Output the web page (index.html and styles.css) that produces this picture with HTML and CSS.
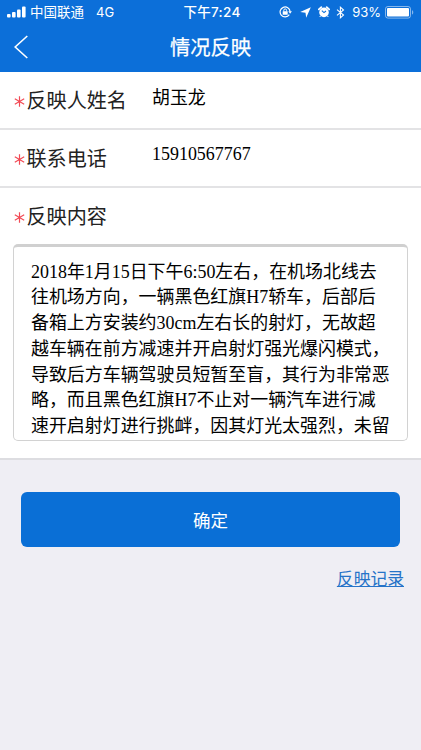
FILE: index.html
```html
<!DOCTYPE html>
<html lang="zh-CN">
<head>
<meta charset="utf-8">
<title>情况反映</title>
<link rel="stylesheet" href="styles.css">
</head>
<body>
<header class="header">
  <div class="status">
    <div class="status-left">
      <svg class="signal" width="19" height="12" viewBox="0 0 19 12" fill="currentColor"><rect x="0" y="8" width="3.6" height="3.6" rx="1"/><rect x="5" y="6" width="3.6" height="5.6" rx="1"/><rect x="10" y="3.5" width="3.6" height="8.1" rx="1"/><rect x="15" y="0.5" width="3.6" height="11.1" rx="1"/></svg>
      <span class="carrier">中国联通</span>
      <span class="network">4G</span>
    </div>
    <div class="time">下午7:24</div>
    <div class="status-right">
      <svg class="lock" width="13" height="12" viewBox="0 0 13 12" fill="none" stroke="currentColor" stroke-width="1.2"><path d="M10.3 8.7A5 5 0 1 1 11.1 5.6"/><path d="M9.3 5.3h3.6L11.1 7.7z" fill="currentColor" stroke="none"/><rect x="3.7" y="5.2" width="5" height="3.6" rx=".4" fill="currentColor" stroke="none"/><path d="M4.8 5.5V4.3a1.4 1.4 0 0 1 2.8 0v1.2" stroke-width="1"/></svg>
      <svg class="arrow" width="11" height="11" viewBox="0 0 11 11" fill="currentColor"><path d="M10.8.2 6.2 10.8 5.5 5.7.2 5z"/></svg>
      <svg class="alarm" width="12" height="12" viewBox="0 0 12 12"><path d="M.8 3.4 3.3 1.1M11.2 3.4 8.7 1.1" stroke="currentColor" stroke-width="1.7" stroke-linecap="round"/><circle cx="6" cy="6.4" r="4.8" fill="currentColor"/><path d="M2.5 10 1.7 11M9.5 10l.8 1" stroke="currentColor"/><path class="hands" d="M3.8 4.7 6 6.6 8 5"/></svg>
      <svg class="bluetooth" width="9" height="13" viewBox="0 0 9 13" fill="none" stroke="currentColor" stroke-width="1.1"><path d="M1 3.6 7.5 9 4.4 11.8V1.2L7.5 4 1 9.4"/></svg>
      <span class="percent">93%</span>
      <svg class="battery" width="29" height="13" viewBox="0 0 29 13"><rect x=".5" y=".5" width="25" height="11.6" rx="2.4" fill="none" stroke="currentColor" opacity=".5"/><rect x="2" y="2" width="22" height="8.6" rx="1" fill="currentColor"/><path d="M27 4.2c1.7.5 1.7 3.7 0 4.2z" fill="currentColor" opacity=".5"/></svg>
    </div>
  </div>
  <div class="navbar">
    <svg class="back" width="16" height="24" viewBox="0 0 16 24" fill="none" stroke="currentColor" stroke-width="1.6"><path d="M13.3 1 1.2 12 13.3 23"/></svg>
    <h1 class="title">情况反映</h1>
  </div>
</header>
<main>
  <section class="form">
    <div class="row">
      <span class="label"><span class="star"><svg width="11" height="11" viewBox="0 0 11 11"><path d="M5.5.3v10.4M.8 2.8l9.4 5.4M10.2 2.8.8 8.2"/></svg></span>反映人姓名</span>
      <span class="value">胡玉龙</span>
    </div>
    <div class="row">
      <span class="label"><span class="star"><svg width="11" height="11" viewBox="0 0 11 11"><path d="M5.5.3v10.4M.8 2.8l9.4 5.4M10.2 2.8.8 8.2"/></svg></span>联系电话</span>
      <span class="value phone">15910567767</span>
    </div>
    <div class="content">
      <span class="label"><span class="star"><svg width="11" height="11" viewBox="0 0 11 11"><path d="M5.5.3v10.4M.8 2.8l9.4 5.4M10.2 2.8.8 8.2"/></svg></span>反映内容</span>
      <div class="textbox">2018年1月15日下午6:50左右，在机场北线去<br>往机场方向，一辆黑色红旗H7轿车，后部后<br>备箱上方安装约30cm左右长的射灯，无故超<br>越车辆在前方减速并开启射灯强光爆闪模式，<br>导致后方车辆驾驶员短暂至盲，其行为非常恶<br>略，而且黑色红旗H7不止对一辆汽车进行减<br>速开启射灯进行挑衅，因其灯光太强烈，未留</div>
    </div>
  </section>
  <button class="submit" type="button">确定</button>
  <div class="links"><a class="record" href="#">反映记录</a></div>
</main>
</body>
</html>
```

FILE: styles.css
```css
* { box-sizing: border-box; }

body {
  margin: 0;
  min-height: 750px;
  background: #efeef4;
  color: #222;
  font-family: "Liberation Sans", "Noto Sans CJK SC", sans-serif;
  overflow: hidden;
}

svg { display: block; flex: none; }

.header {
  height: 72px;
  background: #0c6fd9;
  color: #fff;
}

.status {
  display: grid;
  grid-template-columns: 1fr auto 1fr;
  align-items: center;
  height: 24px;
  padding: 0 7px;
  font-family: Inter, "Noto Sans CJK SC", sans-serif;
  font-size: 13.5px;
  line-height: 24px;
}

.status-left,
.status-right { display: flex; align-items: center; }
.status-right { justify-content: flex-end; }
.carrier { margin-left: 4px; }
.network { margin-left: 12px; font-size: 13px; }
.time { padding-left: 3px; font-weight: 500; letter-spacing: 0.3px; }
.arrow { margin-left: 8px; }
.alarm { margin-left: 7px; }
.hands { fill: none; stroke: #0c6fd9; stroke-width: 1.1; }
.bluetooth { margin-left: 6px; }
.percent { margin-left: 7px; font-size: 13px; }
.battery { margin-left: 4px; }

.navbar {
  display: grid;
  grid-template-columns: 1fr auto 1fr;
  align-items: center;
  height: 45px;
  padding: 0 14px;
}

.title {
  margin: 0;
  padding-top: 2px;
  font-size: 20.3px;
  font-weight: 400;
  line-height: 30px;
  -webkit-text-stroke: 0.25px currentColor;
}

.form {
  height: 388px;
  background: #fff;
  border-bottom: 2px solid #dddde1;
}

.row {
  display: flex;
  align-items: flex-start;
  height: 58px;
  padding: 14px 14px 0;
  border-bottom: 2px solid #e3e3e5;
}

.label {
  display: flex;
  align-items: center;
  width: 138px;
  font-size: 20.1px;
  line-height: 30px;
  white-space: nowrap;
}

.star { width: 12.5px; }
.star path { fill: none; stroke: #f24a55; stroke-width: 1.2; }

.value,
.textbox {
  color: #000;
  font-family: "Liberation Serif", "Noto Sans CJK SC", serif;
  font-size: 17.95px;
  line-height: 25.8px;
}

.phone { margin-top: -2px; }

.content { padding: 14px 13px 0; }
.content .label { padding-left: 1px; }

.textbox {
  height: 197px;
  margin-top: 12px;
  padding: 12.5px 0 0 17px;
  overflow: hidden;
  white-space: nowrap;
  border: 1px solid #d2d2d2;
  border-top: 3px solid #d0d0d0;
  border-radius: 5px;
}

.submit {
  display: block;
  width: 379px;
  height: 55px;
  margin: 32px 0 0 21px;
  padding: 0;
  border: 0;
  border-radius: 6px;
  background: #0a6fd6;
  color: #fff;
  font-family: "Noto Sans CJK SC", sans-serif;
  font-size: 17.5px;
}

.links {
  display: flex;
  justify-content: flex-end;
  padding: 19px 17px 0 0;
}

.record {
  color: #2673c8;
  font-size: 16.8px;
  line-height: 28px;
  text-decoration-thickness: 1px;
  text-underline-offset: 1px;
}
```
